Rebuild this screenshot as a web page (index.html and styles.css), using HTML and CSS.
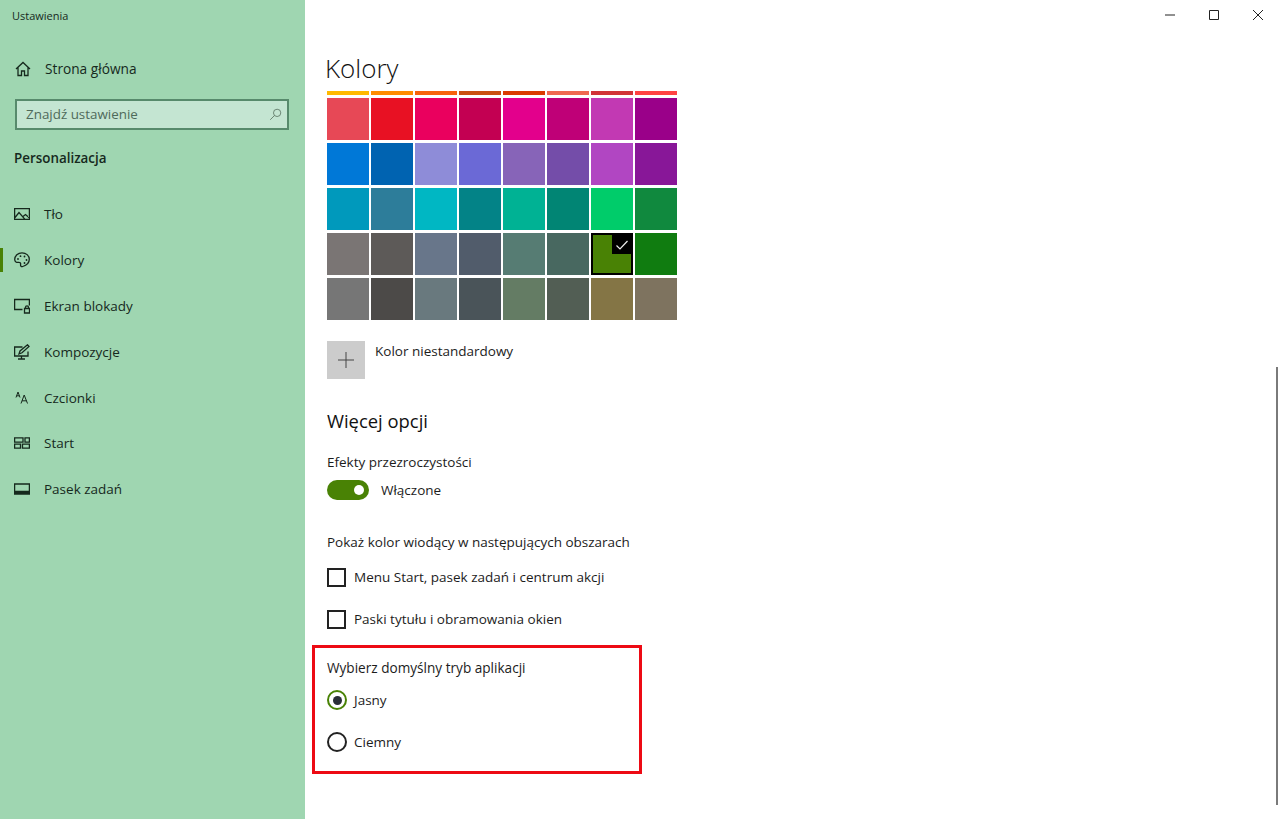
FILE: index.html
```html
<!DOCTYPE html>
<html lang="pl">
  <head>
    <meta charset="UTF-8" />
    <title>Ustawienia</title>
    <link rel="stylesheet" href="styles.css">
  </head>
  <body>
    <div class="window">
      <aside class="sidebar">
        <div class="app__title">Ustawienia</div>

        <div class="home">
          <svg class="icon" viewBox="0 0 16 16"><path d="M1 8 8 1.5 15 8M3 6.5V14.5H6.5V10H9.5V14.5H13V6.5" /></svg>
          <span>Strona główna</span>
        </div>

        <div class="search">
          <span>Znajdź ustawienie</span>
          <svg class="search__icon" viewBox="0 0 16 16"><circle cx="10" cy="6" r="4.5" /><path d="M6.7 9.3 1.5 14.5" /></svg>
        </div>

        <div class="section__name">Personalizacja</div>

        <nav class="nav">
          <div class="nav__item">
            <svg class="icon" viewBox="0 0 16 16"><path d="M.6 2.6H15.4V13.4H.6ZM.6 12 5 6.5l6 6.900M9 10.500l2.500-2 4 3.500" /></svg>
            <span>Tło</span>
          </div>
          <div class="nav__item nav__item--active">
            <svg class="icon" viewBox="0 0 16 16">
              <path d="M8 .8C4 .8.7 3.800.7 7.600c0 2.400 2 3 3.600 2.800 1.700-.2 2.600.6 2.300 2-.3 1.500.7 2.600 2.100 2.100 3.400-1 6.600-3.500 6.600-7.200C15.300 3.500 12 .8 8 .8Z" />
              <circle class="icon__dot" cx="4" cy="7" r=".9" />
              <circle class="icon__dot" cx="6.500" cy="4.200" r=".9" />
              <circle class="icon__dot" cx="10.500" cy="4.500" r=".9" />
              <circle class="icon__dot" cx="12.500" cy="8" r=".9" />
              <circle class="icon__dot" cx="10.500" cy="11" r=".9" />
            </svg>
            <span>Kolory</span>
          </div>
          <div class="nav__item">
            <svg class="icon" viewBox="0 0 16 16"><path d="M8.500 11.500H.6V1.500H15.400V7.500M10.500 10.500H15.500V15H10.500ZM11.500 10.500V9.200C11.500 7.300 14.500 7.300 14.500 9.200V10.500" /></svg>
            <span>Ekran blokady</span>
          </div>
          <div class="nav__item">
            <svg class="icon" viewBox="0 0 16 16"><path d="M14 7.500V12H.6V3H8.500M4 15H11M7.500 12V15M5 10 6 7 13.500 .8 15 2.500 8 8.800Z" /></svg>
            <span>Kompozycje</span>
          </div>
          <div class="nav__item">
            <svg class="icon" viewBox="0 0 16 16"><path class="icon__thin" d="M2 7.500 4 2 6 7.500M2.600 5.800H5.400M7 13.500 10.200 5 13.500 13.500M8 10.800H12.500" /></svg>
            <span>Czcionki</span>
          </div>
          <div class="nav__item">
            <svg class="icon" viewBox="0 0 16 16"><path d="M.6 2.800H9V7.200H.6ZM11 2.800H15.400V7.200H11ZM.6 9.200H6.500V13.200H.6ZM8.500 9.200H15.400V13.200H8.500Z" /></svg>
            <span>Start</span>
          </div>
          <div class="nav__item">
            <svg class="icon" viewBox="0 0 16 16"><path d="M.6 3H15.400V13H.6ZM.6 10.500H15.400M.6 11.800H15.400" /></svg>
            <span>Pasek zadań</span>
          </div>
        </nav>
      </aside>

      <main class="content">
        <div class="window__buttons">
          <svg viewBox="0 0 12 12"><path d="M1 6H11" /></svg>
          <svg viewBox="0 0 12 12"><path d="M1.500 1.500H10.500V10.500H1.500Z" /></svg>
          <svg viewBox="0 0 12 12"><path d="M1 1 11 11M11 1 1 11" /></svg>
        </div>

        <h1 class="page__title">Kolory</h1>

        <div class="accents">
          <div class="c-ffb900"></div>
          <div class="c-ff8c00"></div>
          <div class="c-f7630c"></div>
          <div class="c-ca5010"></div>
          <div class="c-da3b01"></div>
          <div class="c-ef6950"></div>
          <div class="c-d13438"></div>
          <div class="c-ff4343"></div>
        </div>

        <div class="swatches">
          <div class="c-e74856"></div>
          <div class="c-e81123"></div>
          <div class="c-ea005e"></div>
          <div class="c-c30052"></div>
          <div class="c-e3008c"></div>
          <div class="c-bf0077"></div>
          <div class="c-c239b3"></div>
          <div class="c-9a0089"></div>

          <div class="c-0078d7"></div>
          <div class="c-0063b1"></div>
          <div class="c-8e8cd8"></div>
          <div class="c-6b69d6"></div>
          <div class="c-8764b8"></div>
          <div class="c-744da9"></div>
          <div class="c-b146c2"></div>
          <div class="c-881798"></div>

          <div class="c-0099bc"></div>
          <div class="c-2d7d9a"></div>
          <div class="c-00b7c3"></div>
          <div class="c-038387"></div>
          <div class="c-00b294"></div>
          <div class="c-018574"></div>
          <div class="c-00cc6a"></div>
          <div class="c-10893e"></div>

          <div class="c-7a7574"></div>
          <div class="c-5d5a58"></div>
          <div class="c-68768a"></div>
          <div class="c-515c6b"></div>
          <div class="c-567c73"></div>
          <div class="c-486860"></div>
          <div class="c-498205 swatch--selected">
            <div class="swatch__check">
              <svg viewBox="0 0 12 12"><path d="M.5 6.500 4 10 11.500 2" /></svg>
            </div>
          </div>
          <div class="c-107c10"></div>

          <div class="c-767676"></div>
          <div class="c-4c4a48"></div>
          <div class="c-69797e"></div>
          <div class="c-4a5459"></div>
          <div class="c-647c64"></div>
          <div class="c-525e54"></div>
          <div class="c-847545"></div>
          <div class="c-7e735f"></div>
        </div>

        <div class="custom">
          <div class="custom__button">
            <svg viewBox="0 0 16 16"><path d="M8 0V16M0 8H16" /></svg>
          </div>
          <span>Kolor niestandardowy</span>
        </div>

        <h2 class="sub__title">Więcej opcji</h2>

        <div class="label label--effects">Efekty przezroczystości</div>
        <div class="toggle__row">
          <div class="toggle"><div class="toggle__knob"></div></div>
          <span>Włączone</span>
        </div>

        <div class="label label--accent">Pokaż kolor wiodący w następujących obszarach</div>
        <div class="option option--first">
          <div class="checkbox"></div>
          <span>Menu Start, pasek zadań i centrum akcji</span>
        </div>
        <div class="option">
          <div class="checkbox"></div>
          <span>Paski tytułu i obramowania okien</span>
        </div>

        <div class="label label--mode">Wybierz domyślny tryb aplikacji</div>
        <div class="option option--radio-first">
          <div class="radio radio--on"><div class="radio__dot"></div></div>
          <span>Jasny</span>
        </div>
        <div class="option">
          <div class="radio"></div>
          <span>Ciemny</span>
        </div>

        <!-- red frame drawn over the screenshot -->
        <div class="highlight"></div>
        <div class="scrollbar"></div>
      </main>
    </div>
  </body>
</html>
```

FILE: styles.css
```css
* {
  padding: 0;
  margin: 0;
  box-sizing: border-box;
}

body {
  font-family: "Open Sans", "Noto Sans", sans-serif;
  font-size: 13.5px;
  line-height: 20px;
  color: #1c1c1c;
  background: #fff;
  overflow: hidden;
}

svg {
  fill: none;
  stroke: currentColor;
  stroke-width: 1;
  display: block;
}

.window {
  height: 819px;
  display: flex;
}

/* sidebar */
.sidebar {
  width: 305px;
  flex-shrink: 0;
  background: #9fd6b1;
  color: #16291d;
}

.app__title {
  padding: 6px 0 0 12px;
  font-size: 11px;
}

.home {
  display: flex;
  align-items: center;
  gap: 14px;
  margin-top: 33px;
  padding-left: 15px;
  font-size: 13.7px;
}

.search {
  display: flex;
  justify-content: space-between;
  align-items: center;
  height: 31px;
  margin: 20px 16px 0 15px;
  padding: 0 5px 1px 9px;
  border: 2px solid #578a6c;
  background: #c4e5d2;
  color: #4f6a5a;
  font-size: 13.4px;
}

.search__icon {
  width: 13px;
  height: 13px;
  color: #58705f;
}

.section__name {
  margin-top: 18px;
  padding-left: 14px;
  font-size: 13.4px;
  font-weight: 600;
}

.nav {
  margin-top: 23.5px;
}

.nav__item {
  display: flex;
  align-items: center;
  gap: 14px;
  height: 45.8px;
  padding-left: 14px;
  position: relative;
  font-size: 13.5px;
}

.icon {
  width: 16px;
  height: 16px;
  flex-shrink: 0;
  stroke-width: 1.3;
}

.icon__dot {
  fill: currentColor;
  stroke: none;
}

.icon__thin {
  stroke-width: 1;
}

.nav__item--active::before {
  content: "";
  position: absolute;
  left: 0;
  top: 11px;
  width: 3px;
  height: 24px;
  background: #498205;
}

/* main column */
.content {
  flex: 1;
  position: relative;
  padding: 49px 0 0 22px;
}

.window__buttons {
  position: absolute;
  top: 9px;
  right: 16px;
  display: flex;
  gap: 32px;
  color: #222;
}

.window__buttons svg {
  width: 12px;
  height: 12px;
}

.page__title {
  height: 38px;
  margin-left: -2px;
  font-size: 26px;
  line-height: 38px;
  font-weight: 300;
  color: #111;
}

.accents {
  display: grid;
  grid-template-columns: repeat(8, 42px);
  column-gap: 2px;
  margin-top: 4px;
  height: 4px;
}

.swatches {
  display: grid;
  grid-template-columns: repeat(8, 42px);
  grid-auto-rows: 42px;
  column-gap: 2px;
  row-gap: 3px;
  margin-top: 3px;
}

.swatch--selected {
  position: relative;
  border: 2px solid #000;
}

.swatch__check {
  position: absolute;
  top: 0;
  right: 0;
  width: 19px;
  height: 19px;
  display: flex;
  justify-content: center;
  align-items: center;
  background: #000;
  color: #eee;
}

.swatch__check svg {
  width: 12px;
  height: 12px;
  stroke-width: 1.2;
}

.custom {
  display: flex;
  gap: 10px;
  margin-top: 21px;
}

.custom__button {
  width: 38px;
  height: 38px;
  display: flex;
  justify-content: center;
  align-items: center;
  background: #cccccc;
  color: #444;
}

.custom__button svg {
  width: 16px;
  height: 16px;
}

.sub__title {
  margin-top: 28px;
  font-size: 18.4px;
  line-height: 28px;
  font-weight: 400;
  color: #111;
}

.label--effects {
  margin-top: 17px;
}

.toggle__row {
  display: flex;
  align-items: center;
  gap: 12px;
  margin-top: 8px;
}

.toggle {
  width: 42px;
  height: 20px;
  display: flex;
  justify-content: flex-end;
  align-items: center;
  padding-right: 5px;
  border-radius: 10px;
  background: #498205;
}

.toggle__knob {
  width: 10px;
  height: 10px;
  border-radius: 50%;
  background: #fff;
}

.label--accent {
  margin-top: 32px;
}

.label--mode {
  margin-top: 29px;
  font-size: 13.6px;
}

.option {
  display: flex;
  align-items: center;
  gap: 8px;
  height: 20px;
  margin-top: 22px;
}

.option--first {
  margin-top: 15px;
}

.option--radio-first {
  margin-top: 12px;
}

.checkbox {
  width: 19px;
  height: 19px;
  border: 2px solid #222;
}

.radio {
  width: 20px;
  height: 20px;
  margin-right: -1px;
  display: flex;
  justify-content: center;
  align-items: center;
  border: 2px solid #222;
  border-radius: 50%;
}

.radio--on {
  border-color: #498205;
}

.radio__dot {
  width: 9px;
  height: 9px;
  border-radius: 50%;
  background: #2a2e38;
}

.highlight {
  position: absolute;
  left: 7px;
  top: 645px;
  width: 330px;
  height: 129px;
  border: 3px solid #ed0a14;
}

.scrollbar {
  position: absolute;
  right: 2px;
  top: 367px;
  width: 2px;
  height: 438px;
  background: #7a7a7a;
}

/* accent palette */
.c-ffb900 { background: #ffb900; }
.c-ff8c00 { background: #ff8c00; }
.c-f7630c { background: #f7630c; }
.c-ca5010 { background: #ca5010; }
.c-da3b01 { background: #da3b01; }
.c-ef6950 { background: #ef6950; }
.c-d13438 { background: #d13438; }
.c-ff4343 { background: #ff4343; }
.c-e74856 { background: #e74856; }
.c-e81123 { background: #e81123; }
.c-ea005e { background: #ea005e; }
.c-c30052 { background: #c30052; }
.c-e3008c { background: #e3008c; }
.c-bf0077 { background: #bf0077; }
.c-c239b3 { background: #c239b3; }
.c-9a0089 { background: #9a0089; }
.c-0078d7 { background: #0078d7; }
.c-0063b1 { background: #0063b1; }
.c-8e8cd8 { background: #8e8cd8; }
.c-6b69d6 { background: #6b69d6; }
.c-8764b8 { background: #8764b8; }
.c-744da9 { background: #744da9; }
.c-b146c2 { background: #b146c2; }
.c-881798 { background: #881798; }
.c-0099bc { background: #0099bc; }
.c-2d7d9a { background: #2d7d9a; }
.c-00b7c3 { background: #00b7c3; }
.c-038387 { background: #038387; }
.c-00b294 { background: #00b294; }
.c-018574 { background: #018574; }
.c-00cc6a { background: #00cc6a; }
.c-10893e { background: #10893e; }
.c-7a7574 { background: #7a7574; }
.c-5d5a58 { background: #5d5a58; }
.c-68768a { background: #68768a; }
.c-515c6b { background: #515c6b; }
.c-567c73 { background: #567c73; }
.c-486860 { background: #486860; }
.c-498205 { background: #498205; }
.c-107c10 { background: #107c10; }
.c-767676 { background: #767676; }
.c-4c4a48 { background: #4c4a48; }
.c-69797e { background: #69797e; }
.c-4a5459 { background: #4a5459; }
.c-647c64 { background: #647c64; }
.c-525e54 { background: #525e54; }
.c-847545 { background: #847545; }
.c-7e735f { background: #7e735f; }
```
